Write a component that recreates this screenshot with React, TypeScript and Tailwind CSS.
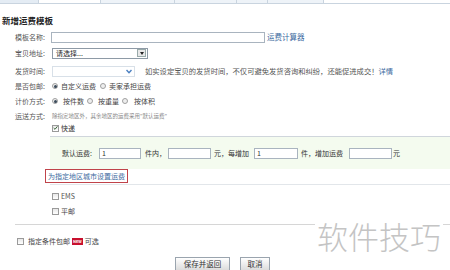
const cn = "font-['SimSun','Noto_Sans_CJK_SC',sans-serif]";

const Checkbox = ({ checked = false }: { checked?: boolean }) => (
  <span className="flex h-[7px] w-[7px] items-center justify-center border border-[#9a9a9a] bg-gradient-to-b from-[#e8e8e8] to-[#ffffff]">
    {checked ? (
      <svg width="6" height="6" viewBox="0 0 6 6">
        <path d="M0.8 3 L2.4 4.6 L5.3 1" fill="none" stroke="#2a5a2a" strokeWidth="1.1" />
      </svg>
    ) : null}
  </span>
);

const Radio = ({ checked = false }: { checked?: boolean }) => (
  <span className="flex h-[6px] w-[6px] items-center justify-center rounded-full border border-[#a0a0a0] bg-[#eeeeee]">
    {checked ? <span className="h-[3px] w-[3px] rounded-full bg-[#3a4a5a]" /> : null}
  </span>
);

const Field = ({ w, value }: { w: string; value?: string }) => (
  <span className={`flex h-[11px] items-center border border-[#a9b4bf] bg-white pl-[2px] text-[7px] text-[#333] ${w}`}>
    {value}
  </span>
);

const Label = ({ children }: { children: string }) => (
  <span className="w-[37px] shrink-0 text-[7px] text-[#555]">{children}</span>
);

export default function App() {
  return (
    <div className={`relative h-[270px] w-[450px] overflow-hidden bg-white ${cn}`}>
      {/* tab strip */}
      <div className="flex h-[4px] border-b border-[#c9d4df]">
        <div className="w-[39px] border-r border-[#c9d4df] bg-[#e4ecf4]" />
        <div className="w-[61px] bg-white" />
        <div className="w-[75px] border-x border-[#c9d4df] bg-[#eef3f8]" />
        <div className="w-[62px] border-r border-[#c9d4df] bg-[#eef3f8]" />
        <div className="w-[31px] border-r border-[#c9d4df] bg-[#eef3f8]" />
        <div className="w-[56px] border-r border-[#c9d4df] bg-[#eef3f8]" />
      </div>

      <div className="mt-[9px] flex h-[14px] items-center pl-[2px] text-[8.5px] font-bold text-[#222]">
        新增运费模板
      </div>

      <div className="pl-[15px]">
        <div className="mt-[3px] flex h-[14px] items-center">
          <Label>模板名称:</Label>
          <Field w="w-[214px] -ml-[1px]" />
          <a className="ml-[2px] text-[7.5px] text-[#3d6aa0]">运费计算器</a>
        </div>

        <div className="mt-[2px] flex h-[14px] items-center">
          <Label>宝贝地址:</Label>
          <span className="flex h-[11px] w-[96px] items-center justify-between border border-[#8e9aa6] bg-white pl-[3px] text-[7px] text-[#222]">
            请选择...
            <span className="mr-[1px] flex h-[8px] w-[9px] items-center justify-center border border-[#9aa] bg-[#e8e8e8]">
              <span className="border-x-[2px] border-t-[3px] border-x-transparent border-t-[#222]" />
            </span>
          </span>
        </div>

        <div className="mt-[4px] flex h-[14px] items-center">
          <Label>发货时间:</Label>
          <span className="flex h-[11px] w-[83px] items-center justify-end border border-[#d8e0e8] bg-white pr-[2px]">
            <svg width="6" height="5" viewBox="0 0 6 5">
              <path d="M0.5 1 L3 3.8 L5.5 1" fill="none" stroke="#4a7fc0" strokeWidth="1.4" />
            </svg>
          </span>
          <span className="ml-[10px] text-[7.3px] text-[#555]">
            如实设定宝贝的发货时间，不仅可避免发货咨询和纠纷，还能促进成交！<a className="text-[#3d6aa0]">详情</a>
          </span>
        </div>

        <div className="mt-[2px] flex h-[12px] items-center text-[7px] text-[#444]">
          <Label>是否包邮:</Label>
          <Radio checked />
          <span className="ml-[3px]">自定义运费</span>
          <span className="ml-[4px]"><Radio /></span>
          <span className="ml-[3px]">卖家承担运费</span>
        </div>

        <div className="mt-[3px] flex h-[12px] items-center text-[7px] text-[#444]">
          <Label>计价方式:</Label>
          <Radio checked />
          <span className="ml-[5px]">按件数</span>
          <span className="ml-[3px]"><Radio /></span>
          <span className="ml-[5px]">按重量</span>
          <span className="ml-[3px]"><Radio /></span>
          <span className="ml-[6px]">按体积</span>
        </div>

        <div className="mt-[3px] flex h-[12px] items-center">
          <Label>运送方式:</Label>
          <span className="text-[5.5px] text-[#888]">除指定地区外，其余地区的运费采用"默认运费"</span>
        </div>

        <div className="flex h-[12px] items-center pl-[37px] text-[7px] text-[#333]">
          <Checkbox checked />
          <span className="ml-[2px]">快递</span>
        </div>

        <div className="ml-[35px] mt-[2px] flex h-[49px] flex-col border-y border-t-[#d0d6dc] border-b-[#e2e6ea]">
          <div className="flex h-[32px] items-center bg-[#f4fbef] pl-[12px] text-[7px] text-[#333]">
            <span className="w-[37px]">默认运费:</span>
            <Field w="w-[42px]" value="1" />
            <span className="ml-[4px] w-[23px]">件内，</span>
            <Field w="w-[43px]" />
            <span className="ml-[3px] w-[40px]">元，每增加</span>
            <Field w="w-[44px]" value="1" />
            <span className="ml-[3px] w-[48px]">件，增加运费</span>
            <Field w="w-[43px]" />
            <span className="ml-[1px]">元</span>
          </div>
          <div className="-ml-[5px] flex h-[14px] w-fit items-center border border-[#c0434a] px-[2px] text-[7px] text-[#3d6aa0]">
            为指定地区城市设置运费
          </div>
        </div>

        <div className="mt-[5px] flex h-[12px] items-center pl-[37px] text-[7px] text-[#555]">
          <Checkbox />
          <span className="ml-[2px]">EMS</span>
        </div>
        <div className="mt-[3px] flex h-[12px] items-center pl-[37px] text-[7px] text-[#444]">
          <Checkbox />
          <span className="ml-[2px]">平邮</span>
        </div>

        <div className="mt-[7px] border-t border-[#d6d6d6]" />

        <div className="mt-[10px] flex h-[12px] items-center pl-[2px] text-[7px] text-[#444]">
          <Checkbox />
          <span className="ml-[4px]">指定条件包邮</span>
          <span className="ml-[2px] flex h-[7px] items-center bg-[#c8102e] px-[1px] text-[4px] font-bold text-white">New</span>
          <span className="ml-[2px]">可选</span>
        </div>

        <div className="mt-[10px] flex items-start pl-[160px] text-[7.5px] text-[#333]">
          <span className="flex h-[14px] w-[55px] items-center justify-center border border-[#9aa4ae] bg-gradient-to-b from-[#ffffff] to-[#dcdcdc]">
            保存并返回
          </span>
          <span className="ml-[10px] flex h-[14px] w-[30px] items-center justify-center border border-[#9aa4ae] bg-gradient-to-b from-[#ffffff] to-[#dcdcdc]">
            取消
          </span>
        </div>
      </div>

      {/* watermark */}
      <div className="absolute left-[315px] top-[218px] bg-white px-[2px] font-['Noto_Sans_CJK_SC',sans-serif] text-[31px] leading-[36px] font-light text-[#c4c4c4]">
        软件技巧
      </div>
    </div>
  );
}
